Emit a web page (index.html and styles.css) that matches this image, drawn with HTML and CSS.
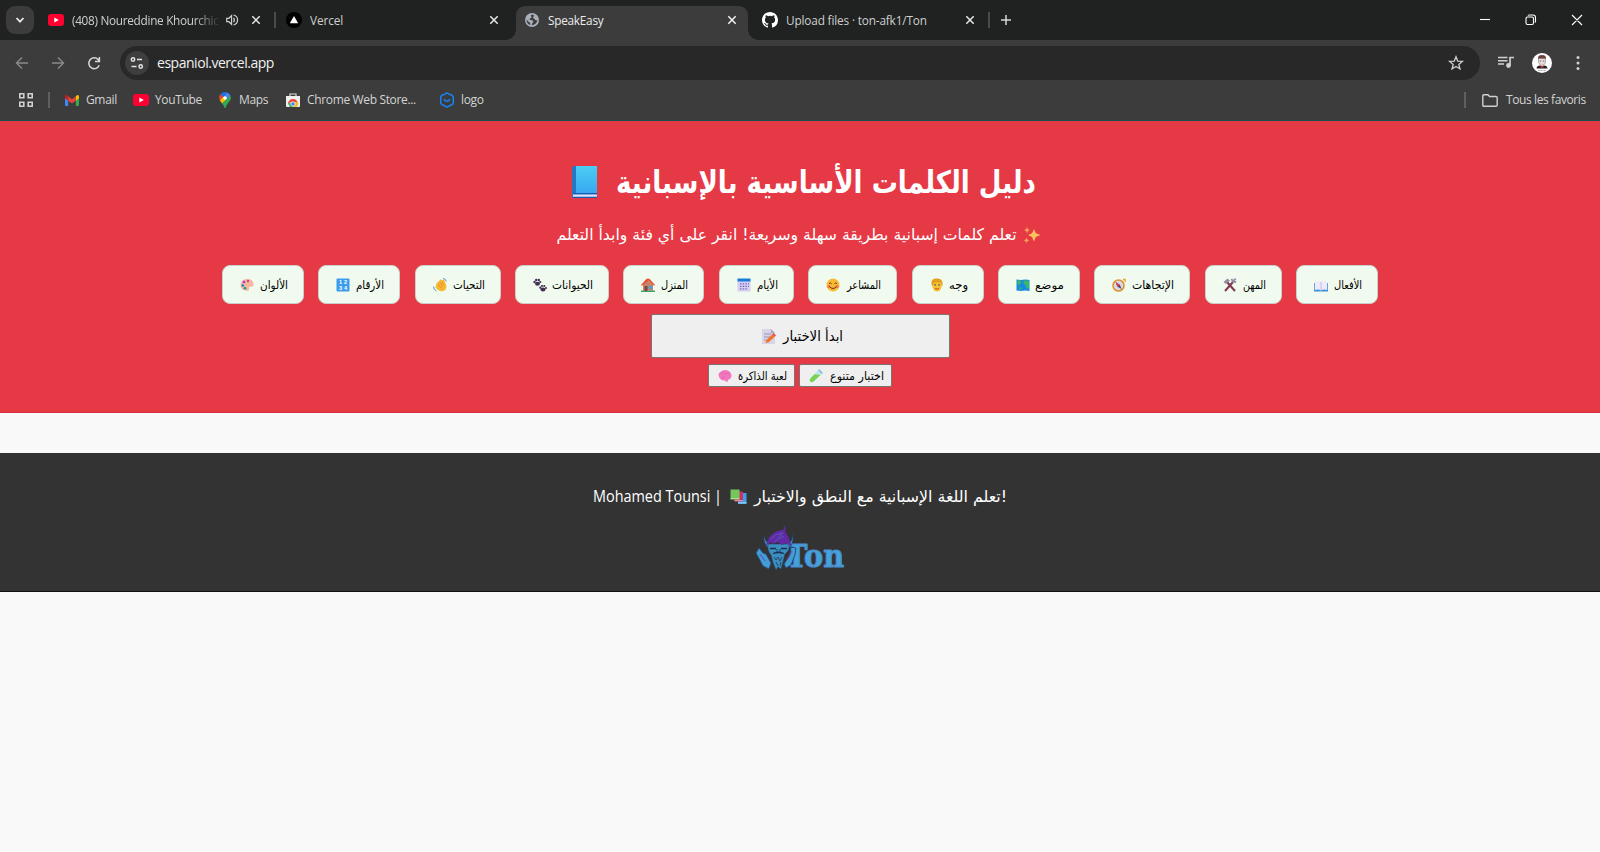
FILE: index.html
```html
<!DOCTYPE html>
<html lang="ar">
<head>
<meta charset="utf-8">
<title>SpeakEasy</title>
<link rel="stylesheet" href="styles.css">
</head>
<body>
<div class="browser">
  <div class="tabstrip">
    <div class="tab-search"><svg width="10" height="10" viewBox="0 0 10 10"><path d="M1.5 3 5 6.7 8.500 3" fill="none" stroke="#e8e8e8" stroke-width="1.8"/></svg></div>
    <div class="tab tab-yt">
      <svg width="16" height="16" viewBox="0 0 16 16"><rect y="2" width="16" height="12" rx="3" fill="#ff0033"/><path d="M6.300 5.500v5L10.800 8z" fill="#fff"/></svg>
      <span class="title fade">(408) Noureddine Khourchic</span>
      <svg class="sound" width="12" height="12" viewBox="0 0 14 14" fill="none" stroke="#cfcfcf" stroke-width="1.400"><path d="M.8 5h2.500L6.500 2v10L3.300 9H.8z"/><path d="M8.800 4.500q2 2.500 0 5M8.800 1.200q4.700 1.300 4.700 5.800t-4.700 5.800"/></svg>
      <svg class="x" width="10" height="10" viewBox="0 0 10 10"><path d="m1.300 1.300 7.400 7.400m0-7.400L1.300 8.700" stroke="#e8e8e8" stroke-width="1.500"/></svg>
    </div>
    <i class="sep"></i>
    <div class="tab tab-vercel">
      <svg width="16" height="16" viewBox="0 0 16 16"><circle cx="8" cy="8" r="8" fill="#000"/><path d="m8 4 4.200 7.200H3.800z" fill="#fff"/></svg>
      <span class="title">Vercel</span>
      <svg class="x" width="10" height="10" viewBox="0 0 10 10"><path d="m1.300 1.300 7.400 7.400m0-7.400L1.300 8.700" stroke="#e8e8e8" stroke-width="1.500"/></svg>
    </div>
    <div class="tab tab-active">
      <svg width="14" height="14" viewBox="0 0 16 16"><circle cx="8" cy="8" r="8" fill="#a9afb8"/><path d="M8.500 1.800c-2 .5-2.200 1.700-1.200 2.500 1.200.9-.7 1.600-1.700 2C4.500 6.700 5 8 6.500 8c2 .1 3.500.5 3 2-.4 1.200-1.600 1.500-1.700 4 3-.1 6-2.500 6.300-6-1.500.7-2.500.1-3.100-1-.7-1.200-2.200-1-1.800-2.200.2-.9 1.100-.8 1.300-1.600zM1.600 7.300c.1 3 1.700 5.300 4.500 6.400.4-1.500-.3-2.300-1.200-3.100-1.200-1-2-2-3.300-3.300z" fill="#3c3c3c"/></svg>
      <span class="title">SpeakEasy</span>
      <svg class="x" width="10" height="10" viewBox="0 0 10 10"><path d="m1.300 1.300 7.400 7.400m0-7.400L1.300 8.700" stroke="#f2f2f2" stroke-width="1.500"/></svg>
    </div>
    <div class="tab tab-github">
      <svg width="16" height="16" viewBox="0 0 16 16"><path fill="#fff" d="M8 0C3.580 0 0 3.580 0 8c0 3.540 2.290 6.530 5.470 7.590.4.070.55-.17.55-.38 0-.19-.01-.82-.01-1.490-2.010.37-2.530-.49-2.690-.94-.09-.23-.48-.94-.82-1.130-.28-.15-.68-.52-.01-.53.630-.01 1.080.58 1.230.82.72 1.210 1.870.87 2.330.66.070-.52.28-.87.51-1.070-1.780-.2-3.640-.89-3.640-3.950 0-.87.31-1.590.82-2.150-.08-.2-.36-1.020.08-2.120 0 0 .67-.21 2.200.82a7.600 7.600 0 0 1 4 0c1.530-1.040 2.200-.82 2.200-.82.44 1.100.16 1.920.08 2.120.51.56.82 1.270.82 2.150 0 3.070-1.870 3.750-3.650 3.950.29.25.54.73.54 1.480 0 1.070-.01 1.930-.01 2.200 0 .21.15.46.55.38A8 8 0 0 0 16 8c0-4.420-3.580-8-8-8z"/></svg>
      <span class="title">Upload files · ton-afk1/Ton</span>
      <svg class="x" width="10" height="10" viewBox="0 0 10 10"><path d="m1.300 1.300 7.400 7.400m0-7.400L1.300 8.700" stroke="#e8e8e8" stroke-width="1.500"/></svg>
    </div>
    <i class="sep"></i>
    <svg class="newtab" width="12" height="12" viewBox="0 0 12 12"><path d="M6 1v10M1 6h10" stroke="#d8d8d8" stroke-width="1.500"/></svg>
    <svg class="win" width="104" height="14" viewBox="0 0 104 14" fill="none" stroke="#fff" stroke-width="1.100"><path d="M1 6.500h10"/><rect x="47" y="4" width="7.500" height="7.500" rx="1.500"/><path d="M49 2.500q.3-.5 1.500-.5H54q2.500 0 2.500 2.500V8q0 1.200-.7 1.500M93 2l10 10m0-10L93 12"/></svg>
  </div>

  <div class="toolbar">
    <svg class="nav" width="14" height="14" viewBox="0 0 14 14" fill="none" stroke="#8a8a8a" stroke-width="1.400"><path d="M13 7H2M7 1.500 1.500 7 7 12.500"/></svg>
    <svg class="nav" width="14" height="14" viewBox="0 0 14 14" fill="none" stroke="#8a8a8a" stroke-width="1.400"><path d="M1 7h11M7 1.500 12.500 7 7 12.500"/></svg>
    <svg class="nav" width="14" height="14" viewBox="0 0 14 14" fill="none" stroke="#d8d8d8" stroke-width="1.500"><path d="M12.200 9.300A5.400 5.400 0 1 1 11 3.400l1.200 1.600M12.400 1v4.500H8"/></svg>
    <div class="omnibox">
      <div class="site"><svg width="14" height="12" viewBox="0 0 14 12" fill="none" stroke="#e4e4e4" stroke-width="1.500"><circle cx="3" cy="2.500" r="1.700"/><path d="M7 2.500h5M1.500 9.500h5"/><circle cx="10.700" cy="9.500" r="1.700"/></svg></div>
      <span>espaniol.vercel.app</span>
      <svg class="star" width="16" height="16" viewBox="0 0 16 16" fill="none" stroke="#d0d0d0" stroke-width="1.300"><path d="m8 1.800 1.700 4.300 4.700.3-3.600 3 1.200 4.500L8 11.400l-4 2.500 1.200-4.500-3.600-3 4.700-.3z"/></svg>
    </div>
    <svg class="music" width="16" height="14" viewBox="0 0 16 14"><path d="M0 1.500h9.500M0 4.800h9.500M0 8h6" stroke="#d0d0d0" stroke-width="1.500"/><path d="M12 1v8.500M11.500 1.500H16" stroke="#d0d0d0" stroke-width="1.700"/><circle cx="10.500" cy="9.500" r="2.400" fill="#d0d0d0"/></svg>
    <svg class="avatar" width="20" height="20" viewBox="0 0 20 20"><circle cx="10" cy="10" r="10" fill="#fff"/><path d="M6 6q-.5-4 4-4t4 4z" fill="#6c423a"/><path d="M6.500 5.500h7V9q-.5 3-3.500 3.500Q7 12 6.500 9z" fill="#e7dedb" stroke="#776d69" stroke-width=".5"/><path d="M7.800 8h1.400m1.700 0h1.400" stroke="#444" stroke-width=".8"/><path d="M4.500 15.500q.3-3 3.500-3l2 1 2-1q3.200 0 3.500 3z" fill="#222"/><path d="m8.500 12.600 1.500.9 1.500-.9v1.800h-3z" fill="#d7352d"/><path d="M6 17.500h8" stroke="#aaa" stroke-dasharray="1 .5"/></svg>
    <svg class="dots" width="4" height="16" viewBox="0 0 4 16" fill="#d0d0d0"><circle cx="2" cy="2.500" r="1.500"/><circle cx="2" cy="8" r="1.500"/><circle cx="2" cy="13.500" r="1.500"/></svg>
  </div>

  <div class="bookmarks">
    <svg class="apps" width="14" height="14" viewBox="0 0 14 14" fill="none" stroke="#d0d0d0" stroke-width="1.600"><path d="M.8.8h4v4h-4zM9.200.8h4v4h-4zM.8 9.200h4v4h-4zM9.200 9.200h4v4h-4z"/></svg>
    <i class="sep"></i>
    <div class="bm bm-gmail"><svg width="14" height="11" viewBox="0 0 14 11"><path d="M0 2v8q0 1 1 1h2.200V4z" fill="#4285f4"/><path d="M14 2v8q0 1-1 1h-2.200V4z" fill="#34a853"/><path d="M10.800 1.200 12 .3q2-.8 2 1.500v1.400l-3.200 2.500z" fill="#fbbc04"/><path d="M3.200 1.200 2 .3Q0-.5 0 1.800v1.400l3.200 2.500z" fill="#c5221f"/><path d="m3.200 1.200 3.800 3 3.800-3v4.500L7 8.500 3.200 5.700z" fill="#ea4335"/></svg><span>Gmail</span></div>
    <div class="bm bm-yt"><svg width="16" height="12" viewBox="0 0 16 12"><rect width="16" height="12" rx="3" fill="#ff0033"/><path d="M6.300 3.500v5L10.800 6z" fill="#fff"/></svg><span>YouTube</span></div>
    <div class="bm bm-maps"><svg width="12" height="16" viewBox="0 0 12 16"><path d="M6 0a6 6 0 0 0-4.600 2.200l3 2.500L8 .4Q7 0 6 0z" fill="#1a73e8"/><path d="M1.400 2.200Q-.8 5.200.8 8.200l3.600-3.500z" fill="#ea4335"/><path d="M8 .4 4.200 5l3.500 3L11.400 3.400Q10.300 1.200 8 .4z" fill="#4285f4"/><path d="M.8 8.200 3 11.500 7.800 7.500 4.400 4.700z" fill="#fbbc04"/><path d="M11.400 3.400Q13 7 9.500 10.500 7.200 13 6.800 15.500q-.8 1-1.500 0Q4.700 13 3 11.400z" fill="#34a853"/><circle cx="6" cy="6" r="1.800" fill="#fff"/></svg><span>Maps</span></div>
    <div class="bm bm-store"><svg width="14" height="14" viewBox="0 0 14 14"><path d="M4 3V1h6v2" fill="none" stroke="#ddd" stroke-width="1.200"/><path d="M0 3h14v10q0 1-1 1H1q-1 0-1-1z" fill="#eee"/><path d="M2 11a5 5 0 0 1 10 0v1H9V9H5z" fill="#ea4335"/><path d="M2 10.500 4 14h3L5 10z" fill="#34a853"/><path d="M9 9h3q.5 3-1.500 5H7z" fill="#fbbc04"/><circle cx="7" cy="11" r="2.200" fill="#4285f4" stroke="#fff" stroke-width=".7"/></svg><span>Chrome Web Store...</span></div>
    <div class="bm bm-logo"><svg width="16" height="16" viewBox="0 0 16 16" fill="none" stroke="#1684f8" stroke-width="1.500"><path d="m8 .8 3 1.800q3.300.8 3.300 2.900v5q0 1.200-1.300 2L8 15.200l-5-2.700q-1.300-.8-1.300-2v-5q0-2.100 3.300-2.900zM5 7.300q3 4 6 0"/></svg><span>logo</span></div>
    <div class="favs"><i class="sep"></i><svg width="16" height="13" viewBox="0 0 16 13" fill="none" stroke="#d0d0d0" stroke-width="1.400"><path d="M.8 2q0-1.200 1.200-1.200h4l1.500 1.700H14q1.200 0 1.200 1.200V11q0 1.200-1.200 1.200H2Q.8 12.200.8 11z"/></svg><span>Tous les favoris</span></div>
  </div>
</div>

<header class="hero">
  <h1>
    <svg class="book" width="28" height="34" viewBox="0 0 28 34"><defs><linearGradient id="book" x2="0" y2="1"><stop stop-color="#4bcdf4"/><stop offset="1" stop-color="#39a8f0"/></linearGradient></defs><path d="M1 3q0-2 2-2h23v32H2q-1 0-1-2z" fill="#2578c4"/><path d="M5 1h21v27H5z" fill="url(#book)"/><path d="M2 29.500h24v2.200H2z" fill="#e5def7"/><path d="M2 28.500h24M2 32.500h24" stroke="#1559b5"/></svg>
    <svg class="ar bold" width="420" height="50"><text x="0" y="34" font-size="31" textLength="420" lengthAdjust="spacingAndGlyphs">دليل الكلمات الأساسية بالإسبانية</text></svg>
  </h1>
  <p>
    <svg class="ar" width="460" height="28"><text x="0" y="19" font-size="16" textLength="460" lengthAdjust="spacingAndGlyphs">تعلم كلمات إسبانية بطريقة سهلة وسريعة! انقر على أي فئة وابدأ التعلم</text></svg>
    <svg width="17" height="17" viewBox="0 0 17 17" fill="#fbc05e"><path d="m10.500 2 1.800 4.200L17 8l-4.700 2-1.800 4.500L8.500 10 4.500 8l4-1.800z"/><path d="m3.500 0 .9 2.200 2.100.9-2.100.9-.9 2.200L2.600 4 .5 3.100l2.100-.9zM3 10.500l.8 2 2 .8-2 .9-.8 2-.8-2-2-.9 2-.8z" fill="#ffa45a"/></svg>
  </p>

  <nav class="cats">
    <button style="width:82px"><svg width="14" height="14" viewBox="0 0 14 14"><path d="M7 1q6 0 6.500 5 .2 3-3 2.700-2-.2-1.500 1.500.5 3-3 2.500Q.5 12 .5 7 .5 1.500 7 1z" fill="#f7b69e"/><circle cx="4" cy="4" r="1.300" fill="#8e45cf"/><circle cx="8" cy="3" r="1.200" fill="#e33b7f"/><circle cx="2.800" cy="7.500" r="1.300" fill="#128ad0"/><circle cx="5" cy="10.300" r="1.300" fill="#11a493"/></svg><svg class="ar" width="28" height="24"><text y="16" textLength="28" lengthAdjust="spacingAndGlyphs">الألوان</text></svg></button>
    <button style="width:82px"><svg width="14" height="14" viewBox="0 0 14 14"><rect x=".5" y=".5" width="13" height="13" rx="1" fill="#3b9bed"/><text class="digits" x="3" y="6.300">1</text><text class="digits" x="8" y="6.300">2</text><text class="digits" x="3" y="12.300">3</text><text class="digits" x="8" y="12.300">4</text></svg><svg class="ar" width="28" height="24"><text y="16" textLength="28" lengthAdjust="spacingAndGlyphs">الأرقام</text></svg></button>
    <button style="width:86px"><svg width="14" height="14" viewBox="0 0 14 14"><path d="M3 6 7.500 1.500q1-.5 1 .8L11 1.700q1 .2.500 1.300L13.500 8q0 5-4.500 5.200Q5 13 2.500 9.500q-.5-1.500 1-1L3 7z" fill="#f8b831"/><path d="m5 7 4 3M6.500 5l4 3M8.500 3.500l2.500 3" stroke="#d88520" stroke-width=".8"/><path d="M.5 8.500q.2 3.500 3 4.500M10 .5q3 .2 3.300 3" fill="none" stroke="#5299cf"/></svg><svg class="ar" width="32" height="24"><text y="16" textLength="32" lengthAdjust="spacingAndGlyphs">التحيات</text></svg></button>
    <button style="width:94px"><svg width="14" height="14" viewBox="0 0 14 14" fill="#433052"><ellipse cx="4.500" cy="5.800" rx="2.500" ry="2"/><circle cx="1.500" cy="4" r="1.200"/><circle cx="3.200" cy="2" r="1.200"/><circle cx="5.800" cy="2" r="1.200"/><circle cx="7.300" cy="4" r="1.100"/><ellipse cx="10" cy="11.500" rx="2.500" ry="1.900"/><circle cx="7.300" cy="9.700" r="1.100"/><circle cx="9" cy="8" r="1.100"/><circle cx="11.300" cy="8" r="1.100"/><circle cx="13" cy="9.900" r="1"/></svg><svg class="ar" width="41" height="24"><text y="16" textLength="41" lengthAdjust="spacingAndGlyphs">الحيوانات</text></svg></button>
    <button style="width:81px"><svg width="14" height="14" viewBox="0 0 14 14"><path d="M0 12.500h14V14H0z" fill="#31a66a"/><path d="M2 6.500 7 2l5 4.500v6.300H2z" fill="#c78267"/><path d="M0 7 5.500.8h3L14 7l-1 .8-5.500-5.300L1 7.800z" fill="#e65434"/><path d="M3.500 8h3v5h-3z" fill="#774a43"/><path d="M8 8h3v3H8z" fill="#35a7ed"/></svg><svg class="ar" width="27" height="24"><text y="16" textLength="27" lengthAdjust="spacingAndGlyphs">المنزل</text></svg></button>
    <button style="width:75px"><svg width="14" height="14" viewBox="0 0 14 14"><path d="M.5 1h13v12.500H.5z" fill="#d9cdf0"/><path d="M.5.500h13v3H.5z" fill="#167cdc"/><path d="M3 5.800h9M3 8.300h9M3 10.800h7" stroke="#6e70c3" stroke-width="1.300" stroke-dasharray="1.500 1.200"/></svg><svg class="ar" width="21" height="24"><text y="16" textLength="21" lengthAdjust="spacingAndGlyphs">الأيام</text></svg></button>
    <button style="width:89px"><svg width="14" height="14" viewBox="0 0 14 14"><circle cx="7" cy="7" r="6.500" fill="#fbb831"/><circle cx="2.800" cy="8.500" r="1.500" fill="#f77846"/><circle cx="11.200" cy="8.500" r="1.500" fill="#f77846"/><path d="M3 5.800q1.300-2 2.600 0M8.400 5.800q1.300-2 2.600 0M3.500 8.500q3.500 4 7 0" fill="none" stroke="#553330"/></svg><svg class="ar" width="34" height="24"><text y="16" textLength="34" lengthAdjust="spacingAndGlyphs">المشاعر</text></svg></button>
    <button style="width:72px"><svg width="14" height="14" viewBox="0 0 14 14"><path d="M2.500 4h9v5q-1 4.500-4.500 4.500T2.500 9z" fill="#f9c22e"/><path d="M1.500 7V4Q2 .5 6 .5q6-.3 6.500 4V8h-1L11 4.500H4L2.500 8z" fill="#e0a01c"/><path d="M4.300 6.800H6m2.200 0h1.700" stroke="#376590" stroke-width="1.300"/><path d="M5 10.500q2 1.300 4 0" fill="none" stroke="#b44b2c"/></svg><svg class="ar" width="19" height="24"><text y="16" textLength="19" lengthAdjust="spacingAndGlyphs">وجه</text></svg></button>
    <button style="width:82px"><svg width="14" height="14" viewBox="0 0 14 14"><path d="m.5 1.500 4 .5 5-.5 4 .5v11l-4-.5-5 .5-4-.5z" fill="#168be1"/><path d="M2 2q4-.5 3 2.500l-2 3-2-2zM7.500 2.500l5.500.2v6.600l-2 2-1.500-4-2-2zM3 9l3 1-2 2.500z" fill="#3db668"/></svg><svg class="ar" width="29" height="24"><text y="16" textLength="29" lengthAdjust="spacingAndGlyphs">موضع</text></svg></button>
    <button style="width:96px"><svg width="14" height="14" viewBox="0 0 14 14"><circle cx="6.500" cy="7.500" r="5.500" fill="#d8d9ec" stroke="#dc9629" stroke-width="1.600"/><path d="M11 1.500h2.200V4" fill="none" stroke="#e8a534" stroke-width="1.300"/><path d="M3.500 4 8 7 9.500 11 5.500 8.700z" fill="#564276"/><path d="M3.500 4 8 7 5.500 8.700z" fill="#e03e4a"/></svg><svg class="ar" width="42" height="24"><text y="16" textLength="42" lengthAdjust="spacingAndGlyphs">الإتجاهات</text></svg></button>
    <button style="width:77px"><svg width="14" height="14" viewBox="0 0 14 14"><path d="m4 4 8 9M10 4l-8 9" stroke="#81394f" stroke-width="2.100"/><path d="m.5 4 4-3.500L7 2.700 3 6z" fill="#958aa3"/><path d="m8.500.8 1.200 2.700 3.500.5M9.700 3.500l3-2.800" fill="none" stroke="#958aa3" stroke-width="1.800"/></svg><svg class="ar" width="23" height="24"><text y="16" textLength="23" lengthAdjust="spacingAndGlyphs">المهن</text></svg></button>
    <button style="width:82px"><svg width="14" height="14" viewBox="0 0 14 14"><path d="M0 5h14v8.500H0z" fill="#3b94de"/><path d="M.8 3.500Q5 2 7 4q2-2 6.200-.5V12Q9 11 7 12.500 5 11 .8 12z" fill="#efeafa"/><path d="M7 4v8.500" stroke="#b7b2cd" stroke-width=".8"/></svg><svg class="ar" width="28" height="24"><text y="16" textLength="28" lengthAdjust="spacingAndGlyphs">الأفعال</text></svg></button>
  </nav>

  <button class="quiz"><svg width="15" height="17" viewBox="0 0 15 17"><path d="M1 1h9l4 4v11H1z" fill="#d9d4e8"/><path d="m10 1 4 4h-4z" fill="#aba5bf"/><path d="M3 6h7M3 9h6M3 12h3" stroke="#9992b1"/><path d="m5.500 12 6-6 2.500 2.500-6 5.500-3.500 1.200z" fill="#f0742b"/><path d="m11.500 6 1-1L15 7.500l-1 1z" fill="#e33e57"/></svg><svg class="ar" width="60" height="30"><text y="20" font-size="14" textLength="60" lengthAdjust="spacingAndGlyphs">ابدأ الاختبار</text></svg></button>
  <div class="games">
    <button class="memory"><svg width="14" height="14" viewBox="0 0 14 14"><path d="M1 8Q-.5 4.500 3 2.500 6 0 9.500 1.500q3.500 1 4 5 0 3.500-3 4l-1.500 2.800-2-1.800Q3 12 1 8z" fill="#f277bd"/><path d="M3 5q2-2 4 0 2-2 4 0M3 8q2 2 4-.5" fill="none" stroke="#d95ca6" stroke-width=".6"/></svg><svg class="ar" width="49" height="22"><text y="14.500" textLength="49" lengthAdjust="spacingAndGlyphs">لعبة الذاكرة</text></svg></button>
    <button class="mixed"><svg width="14" height="14" viewBox="0 0 14 14"><path d="m9.500.8 3.700 3.700" stroke="#86c4dd" stroke-width="2"/><path d="m9 1.500 3.500 3.500L4.500 12.500Q2 14 1 12q-1-1 .5-2.800z" fill="#bfe4ec"/><path d="m5.500 5.200 6 .8-7 6.500Q2 14 1 12q-1-1 .5-2.800z" fill="#78d452"/></svg><svg class="ar" width="54" height="22"><text y="14.500" textLength="54" lengthAdjust="spacingAndGlyphs">اختبار متنوع</text></svg></button>
  </div>
</header>

<footer>
  <div class="credit">
    <svg class="latin" width="130" height="26"><text x="0" y="18" textLength="129" lengthAdjust="spacingAndGlyphs">Mohamed Tounsi |</text></svg>
    <svg class="books" width="17" height="16" viewBox="0 0 17 16"><path d="M8 4h8.500v11H8z" fill="#35a4ed"/><path d="M8 13.500h8.500v.8H8z" fill="#d8eafb"/><path d="M4.500 2.500H13v10H4.500z" fill="#d62c66"/><path d="M4.500 11.500H13v.6H4.500z" fill="#eee"/><path d="M.5.500h9v10h-9z" fill="#76c75b"/><path d="M.5 9.500h9v.6h-9z" fill="#d9f3d0"/></svg>
    <svg class="ar" width="253" height="28"><text x="0" y="19" font-size="16" textLength="253" lengthAdjust="spacingAndGlyphs">تعلم اللغة الإسبانية مع النطق والاختبار!</text></svg>
  </div>
  <svg class="brand" width="90" height="48" viewBox="0 0 90 48">
    <g class="ton"><text x="31" y="43" font-size="31" textLength="58" lengthAdjust="spacingAndGlyphs">Ton</text></g>
    <path d="M1 29 4 24l4 5 3 1 5 9-2 6-6-3zM41 24l-5-1-1 8-6 9 2 4 5-3 4-10z" fill="#409ed2" stroke="#294b83"/>
    <path d="M9 11q1 7 6 9l-2 4Q8 19 9 11zM38 10q-1 8-5 10l1 4q5-4 4-14z" fill="#3c8ebc" stroke="#263664" stroke-width=".7"/>
    <path d="M13 20h21q1 7-4 10l-2 8-2 7-3-2-2 3-3-7-2-8q-4-4-3-11z" fill="#3b8fc0" stroke="#263c63" stroke-width=".6"/>
    <path d="M15 24.500h6m5 0h6M18 29.500q6-2 11 0" stroke="#182f4b" fill="none" stroke-width="1.300"/>
    <path d="M22 25v3h3v-3M19 33l2 3 2-3 2 4 2-4M21 38l2 4m3-4-1 4" fill="none" stroke="#1f4266" stroke-width=".9"/>
    <path d="M11 22q2-10 9-14 5-2 8-2 2-2 0-6 4 4 2 8 5 5 6 14l-5-3-4 2-4-3-5 2-3-2z" fill="#6229a5"/>
    <path d="M16 15q5-6 12-6-5 4-8 9m4-3 5-3" fill="none" stroke="#4b66bb" stroke-width=".8"/>
    <path d="m5 30 5 7m27-10-5 9" stroke="#6f42b7"/>
  </svg>
</footer>
</body>
</html>
```
FILE: styles.css
```css
* { box-sizing: border-box; }
body { margin: 0; background: #f9f9f9; font-family: "Open Sans", "Noto Sans", sans-serif; height: 852px; overflow: hidden; }
svg { flex: none; display: block; overflow: visible; }
button { margin: 0; font: inherit; color: #000; }

.browser { height: 121px; background: #3c3c3c; border-bottom: 1px solid #164f4c; color: #dedede; font-size: 12px; }
.tabstrip { height: 40px; background: #202221; display: flex; align-items: center; }
.tab-search { width: 28px; height: 28px; margin-left: 6px; border-radius: 9px; background: #3c3c3c; display: grid; place-items: center; }
.tab { height: 34px; display: flex; align-items: center; gap: 8px; white-space: nowrap; }
.title { flex: 1; overflow: hidden; line-height: 20px; color: #cfcfcf; font-size: 11.8px; letter-spacing: -.1px; }
.tab-yt { width: 213px; margin-left: 14px; }
.tab-yt .title { font-size: 11.800px; letter-spacing: -.3px; margin-right: -3px; }
.fade { -webkit-mask-image: linear-gradient(to right, #000 82%, transparent); mask-image: linear-gradient(to right, #000 82%, transparent); }
.tab-yt .x { margin-left: 5px; }
.sep { display: block; flex: none; width: 2px; height: 16px; background: #4b4b4b; }
.tabstrip > .sep { margin-left: 13px; }
.tab-vercel { width: 213px; margin-left: 10px; }
.tab-active { position: relative; width: 232px; height: 34px; margin: 6px 0 0 17px; padding: 0 11px 6px 9px; gap: 9px; background: #3c3c3c; border-radius: 9px 9px 0 0; }
.tab-active::before, .tab-active::after { content: ""; position: absolute; bottom: 0; width: 10px; height: 10px; }
.tab-active::before { left: -10px; background: radial-gradient(circle at 0 0, #202221 9.500px, #3c3c3c 10px); }
.tab-active::after { right: -10px; background: radial-gradient(circle at 100% 0, #202221 9.500px, #3c3c3c 10px); }
.tab-active .title { color: #ececec; letter-spacing: -.25px; }
.tab-github { width: 213px; margin-left: 14px; }
.tab-github .title { letter-spacing: -.16px; }
.newtab { margin-left: 10px; }
.win { margin-left: auto; margin-right: 17px; }

.toolbar { height: 46px; display: flex; align-items: center; padding-left: 15px; }
.nav { margin-right: 22px; }
.omnibox { width: 1360px; height: 34px; margin-left: -3px; border-radius: 17px; background: #282828; display: flex; align-items: center; padding: 0 16px 0 5px; color: #f0f0f0; font-size: 14px; }
.omnibox span { margin-left: 8px; letter-spacing: -.47px; line-height: 20px; }
.site { width: 24px; height: 24px; border-radius: 50%; background: #3e3e3e; display: grid; place-items: center; }
.star { margin-left: auto; }
.music { margin-left: 18px; }
.avatar { margin-left: 18px; }
.dots { margin-left: 24px; }

.bookmarks { height: 28px; display: flex; align-items: center; padding-left: 19px; color: #d4d4d4; white-space: nowrap; }
.bookmarks span { padding-bottom: 1px; }
.bookmarks .apps { margin-right: 15px; }
.bookmarks .sep { background: #606060; }
.bm { display: flex; align-items: center; gap: 7px; font-size: 12px; letter-spacing: -.35px; }
.bm-gmail { width: 68px; margin-left: 15px; }
.bm-yt { width: 86px; gap: 6px; }
.bm-maps { width: 67px; gap: 8px; }
.bm-store { width: 153px; }
.bm-logo { gap: 6px; }
.favs { margin-left: auto; display: flex; align-items: center; width: 136px; font-size: 12px; letter-spacing: -.4px; }
.favs svg { margin: 0 8px 0 16px; }

.hero { height: 292px; background: #e63946; color: #fff; display: flex; flex-direction: column; align-items: center; padding-top: 38px; border-bottom: 1px solid #d92f3e; }
.ar text { font-family: "DejaVu Sans", sans-serif; fill: currentColor; direction: ltr; }
.ar.bold text { font-weight: 700; }
h1 { margin: 0; width: 466px; height: 50px; display: flex; align-items: center; justify-content: space-between; transform: translateX(3px); }
.book { margin: -4px -1px 0 1px; }
.hero p { margin: 12px 0 0; width: 484px; height: 28px; display: flex; align-items: center; justify-content: space-between; transform: translateX(-1.500px); }
.cats { margin-top: 16px; display: flex; justify-content: space-between; width: 1156px; font-size: 11.500px; }
.cats button { height: 39px; padding: 0 15px 0 17px; display: flex; align-items: center; justify-content: space-between; background: #f1faee; border: 1px solid #c9cfc9; border-radius: 8px; }
.digits { font: 700 5.500px "Liberation Sans", sans-serif; fill: #fff; }
.quiz { width: 299px; height: 44px; margin-top: 10px; display: flex; align-items: center; justify-content: center; gap: 7px; padding: 0 0 0 4px; background: #efefef; border: 1px solid #767676; border-radius: 2px; }
.games { display: flex; gap: 4px; margin-top: 6px; font-size: 11.500px; }
.games button { height: 23px; display: flex; align-items: center; justify-content: space-between; padding: 0 7px 0 9px; background: #efefef; border: 1px solid #767676; border-radius: 2px; }
.memory { width: 87px; }
.mixed { width: 93px; }

footer { margin-top: 40px; height: 139px; background: #333; border-bottom: 1px solid #111; color: #fff; display: flex; flex-direction: column; align-items: center; padding-top: 30px; }
.credit { display: flex; align-items: center; gap: 7px; height: 28px; }
.books { margin-top: -1px; }
.latin text { font: 16px "Open Sans", sans-serif; fill: #fff; }
.brand { margin-top: 13px; }
.ton text { font-family: "DejaVu Serif", serif; font-weight: 700; fill: #44a2dc; stroke: #4a8fd0; stroke-width: 1.200px; stroke-linejoin: round; }
```
